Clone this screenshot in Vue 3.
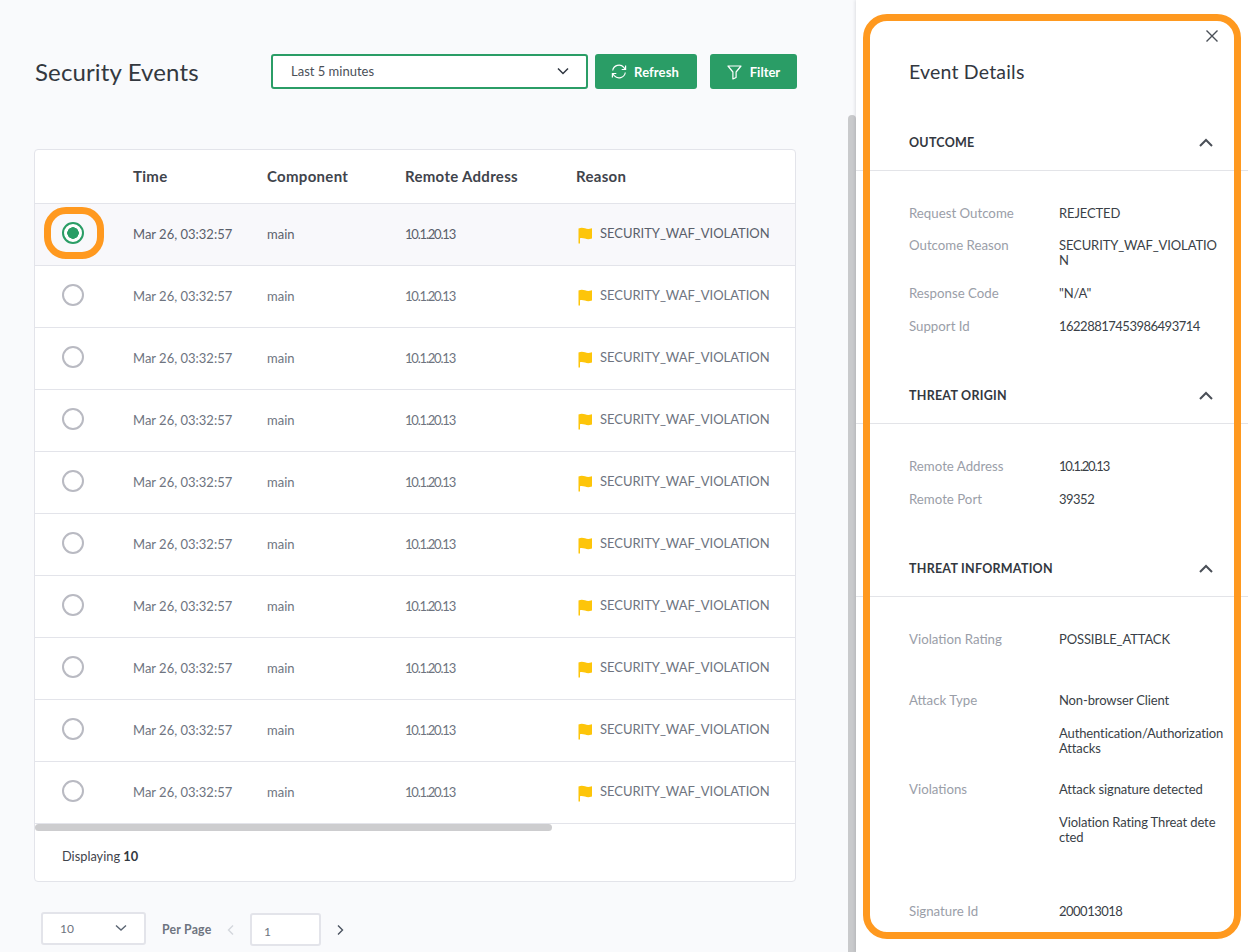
<script setup>
const rows = Array.from({ length: 10 }, (_, i) => i)
const sections = [
  {
    title: 'OUTCOME',
    cls: 'sec-outcome',
    items: [
      { label: 'Request Outcome', values: ['REJECTED'], cls: 'h32' },
      { label: 'Outcome Reason', values: ['SECURITY_WAF_VIOLATIO\nN'], cls: 'h48' },
      { label: 'Response Code', values: ['"N/A"'], cls: 'h33' },
      { label: 'Support Id', values: ['16228817453986493714'], num: true, cls: 'h33' }
    ]
  },
  {
    title: 'THREAT ORIGIN',
    cls: 'sec-origin',
    items: [
      { label: 'Remote Address', values: ['10.1.20.13'], ip: true, cls: 'h33' },
      { label: 'Remote Port', values: ['39352'], num: true, cls: 'h33' }
    ]
  },
  {
    title: 'THREAT INFORMATION',
    cls: 'sec-info',
    items: [
      { label: 'Violation Rating', values: ['POSSIBLE_ATTACK'], cls: 'h61' },
      { label: 'Attack Type', values: ['Non-browser Client', 'Authentication/Authorization\nAttacks'], cls: 'h89' },
      { label: 'Violations', values: ['Attack signature detected', 'Violation Rating Threat dete\ncted'], cls: 'h122' },
      { label: 'Signature Id', values: ['200013018'], num: true, cls: 'h33' }
    ]
  }
]
</script>

<template>
  <div class="page">
    <main class="main">
      <header class="head">
        <h1 class="title">Security Events</h1>
        <div class="range">
          <span>Last 5 minutes</span>
          <svg class="chev" width="14" height="14" viewBox="0 0 14 14"><path d="M2 4.500l5 5 5-5" fill="none" stroke="#2f3640" stroke-width="1.500"/></svg>
        </div>
        <button class="btn btn-refresh">
          <svg width="18" height="17" viewBox="0 0 17 17" fill="none" stroke="#fff" stroke-width="1.200"><path d="M2.200 7.500A6.400 6.400 0 0 1 13.300 4.300l1.500 2"/><path d="M15.100 2.600v3.900h-3.900"/><path d="M14.800 9.500A6.400 6.400 0 0 1 3.700 12.700l-1.500-2"/><path d="M1.900 14.400v-3.900h3.900"/></svg>
          <span>Refresh</span>
        </button>
        <button class="btn btn-filter">
          <svg width="15" height="16" viewBox="0 0 15 16" fill="none" stroke="#fff" stroke-width="1.200" stroke-linejoin="round"><path d="M1 2h13L9.100 8v5.500L5.900 15V8z"/></svg>
          <span>Filter</span>
        </button>
      </header>

      <section class="card">
        <div class="row thead">
          <div></div>
          <div>Time</div>
          <div>Component</div>
          <div>Remote Address</div>
          <div>Reason</div>
        </div>
        <div v-for="r in rows" :key="r" class="row tbody" :class="{ selected: r === 0 }">
          <div class="radio-cell"><span class="radio"></span></div>
          <div>Mar 26, 03:32:57</div>
          <div>main</div>
          <div class="ip">10.1.20.13</div>
          <div class="reason">
            <svg class="flag" width="16" height="17" viewBox="0 0 16 17"><path fill="#fdc50a" d="M1.500 1.500C4 .3 6 .6 8 1.300c2 .7 4 .9 7-.1v10.300c-3 1-5 .8-7 .1-2-.7-4-.9-5-.3v5.200H1.500z"/></svg>
            <span>SECURITY_WAF_VIOLATION</span>
          </div>
        </div>
        <div class="hscroll"><div class="hthumb"></div></div>
        <div class="foot">Displaying <b>10</b></div>
      </section>

      <div class="pager">
        <div class="size">
          <span>10</span>
          <svg width="12" height="12" viewBox="0 0 12 12"><path d="M1 3.500l5 4.500 5-4.500" fill="none" stroke="#5b6573" stroke-width="1.400"/></svg>
        </div>
        <span class="per">Per Page</span>
        <svg class="prev" width="10" height="12" viewBox="0 0 10 12"><path d="M7 1.500L2.500 6 7 10.500" fill="none" stroke="#d3d6dc" stroke-width="1.400"/></svg>
        <div class="pageno">1</div>
        <svg class="next" width="10" height="12" viewBox="0 0 10 12"><path d="M3 1.500L7.500 6 3 10.500" fill="none" stroke="#4a5360" stroke-width="1.400"/></svg>
      </div>

      <div class="vthumb"></div>
      <div class="mark-radio"></div>
    </main>

    <aside class="panel">
      <svg class="close" width="14" height="14" viewBox="0 0 14 14"><path d="M1.500 1.500l11 11M12.500 1.500l-11 11" stroke="#4a4f57" stroke-width="1.400" fill="none"/></svg>
      <h2 class="ptitle">Event Details</h2>
      <section v-for="s in sections" :key="s.title" class="sec" :class="s.cls">
        <div class="sec-head">
          <span>{{ s.title }}</span>
          <svg width="14" height="9" viewBox="0 0 14 9"><path d="M1 8l6-6 6 6" fill="none" stroke="#4a4f57" stroke-width="2"/></svg>
        </div>
        <div class="sec-body">
          <div v-for="it in s.items" :key="it.label" class="kv" :class="it.cls">
            <div class="k">{{ it.label }}</div>
            <div class="vals">
              <div v-for="v in it.values" :key="v" class="v" :class="{ num: it.num, ip: it.ip }">{{ v }}</div>
            </div>
          </div>
        </div>
      </section>
      <div class="mark-panel"></div>
    </aside>
  </div>
</template>

<style>
html, body { margin: 0; background: #f9fafc; }
</style>

<style scoped>
.page {
  display: flex;
  width: 1248px;
  height: 952px;
  overflow: hidden;
  font-family: Lato, "Liberation Sans", sans-serif;
  color: #3a3f47;
  background: #f9fafc;
}
.main {
  position: relative;
  box-sizing: border-box;
  width: 856px;
  padding: 54px 0 0 34px;
  flex: none;
}
.head {
  display: flex;
  align-items: center;
  height: 35px;
}
.title {
  width: 237px;
  margin: 0;
  padding-left: 1px;
  box-sizing: border-box;
  font-size: 24px;
  font-weight: 400;
  color: #33383f;
  letter-spacing: 0.13px;
  white-space: nowrap;
}
.range {
  box-sizing: border-box;
  width: 317px;
  height: 35px;
  display: flex;
  align-items: center;
  justify-content: space-between;
  padding: 0 16px 1px 18px;
  border: 2px solid #2a9d66;
  border-radius: 3px;
  background: #fff;
  font-size: 13px;
  color: #4a4f57;
}
.btn {
  display: flex;
  align-items: center;
  justify-content: center;
  height: 35px;
  border: 0;
  border-radius: 3px;
  background: #2a9d66;
  color: #fff;
  font: 700 13px Lato, "Liberation Sans", sans-serif;
  padding: 0;
}
.btn-refresh { width: 102px; margin-left: 7px; gap: 6px; letter-spacing: 0.1px; padding-right: 3px; }
.btn-filter { width: 87px; margin-left: 13px; gap: 8px; }
.card {
  box-sizing: border-box;
  width: 762px;
  height: 733px;
  margin-top: 60px;
  border: 1px solid #e3e4ea;
  border-radius: 4px;
  background: #fff;
  overflow: hidden;
}
.row {
  display: grid;
  grid-template-columns: 98px 134px 138px 171px 1fr;
  align-items: center;
  box-sizing: border-box;
}
.thead {
  height: 54px;
  padding-bottom: 2px;
  font-size: 15px;
  font-weight: 700;
  color: #3f444c;
  letter-spacing: 0.3px;
  border-bottom: 1px solid #e3e4ea;
}
.tbody {
  height: 62px;
  padding-bottom: 1px;
  font-size: 13px;
  color: #6e7480;
  border-bottom: 1px solid #e3e4ea;
}
.selected { background: #f8f8fb; }
.radio-cell { display: flex; padding-left: 27px; margin-top: -2px; }
.radio {
  box-sizing: border-box;
  width: 22px;
  height: 22px;
  border: 2px solid #b9bac2;
  border-radius: 50%;
  background: #fff;
}
.selected .radio {
  border-color: #2a9d66;
  background: radial-gradient(circle, #2a9d66 0 5.500px, #fff 6px);
}
.selected > div { color: #5a606b; }
.ip { letter-spacing: -1.200px; }
.reason {
  display: flex;
  align-items: flex-start;
  gap: 7px;
  margin-left: 1px;
}
.reason span { margin-top: 1px; letter-spacing: -0.03px; }
.flag { margin-top: 3px; flex: none; }
.hscroll {
  height: 7px;
  background: #fff;
}
.hthumb {
  width: 517px;
  height: 7px;
  border-radius: 4px;
  background: #cdcdcf;
}
.foot {
  padding: 17px 27px;
  font-size: 12.800px;
  color: #3f444c;
}
.foot b { font-weight: 700; color: #33383f; }
.pager {
  display: flex;
  align-items: center;
  margin: 30px 0 0 7px;
  height: 35px;
}
.size {
  box-sizing: border-box;
  width: 105px;
  height: 33px;
  margin-top: -3px;
  display: flex;
  align-items: center;
  justify-content: space-between;
  padding: 0 17px;
  border: 2px solid #e3e4ea;
  border-radius: 3px;
  background: #fff;
  font-size: 12px;
  color: #6e7480;
}
.per {
  width: 65px;
  margin-left: 16px;
  font-size: 12.300px;
  font-weight: 700;
  color: #6e7480;
  letter-spacing: 0.2px;
}
.prev { margin-left: -1px; }
.pageno {
  box-sizing: border-box;
  width: 71px;
  height: 33px;
  margin-left: 14px;
  padding: 9px 12px;
  border: 2px solid #e3e4ea;
  border-radius: 3px;
  background: #fff;
  font-size: 12px;
  color: #6e7480;
}
.next { margin-left: 14px; }
.vthumb {
  position: absolute;
  left: 848px;
  top: 115px;
  width: 8px;
  height: 837px;
  border-radius: 4px 4px 0 0;
  background: #c9cacc;
}
.mark-radio {
  position: absolute;
  left: 44px;
  top: 207px;
  box-sizing: border-box;
  width: 60px;
  height: 52px;
  border: 7px solid #ff991f;
  border-radius: 22px;
}
.panel {
  position: relative;
  box-sizing: border-box;
  width: 392px;
  height: 952px;
  background: #fff;
  box-shadow: -1px 0 3px rgba(30, 35, 50, 0.12);
}
.ptitle {
  margin: 0;
  padding: 60px 0 0 53px;
  height: 36px;
  line-height: 24px;
  font-size: 19.500px;
  font-weight: 400;
  color: #33383f;
  letter-spacing: 0.2px;
  box-sizing: content-box;
}
.close { position: absolute; left: 349px; top: 29px; }
.sec-head {
  box-sizing: border-box;
  display: flex;
  align-items: center;
  justify-content: space-between;
  height: 75px;
  padding: 19px 35px 0 53px;
  border-bottom: 1px solid #e3e4e8;
  font-size: 12.500px;
  font-weight: 700;
  letter-spacing: 0.25px;
  color: #33383f;
}
.sec-body { box-sizing: border-box; padding: 35px 0 0 53px; }
.sec-outcome .sec-body { height: 178px; }
.sec-origin .sec-body { height: 98px; }
.kv {
  display: grid;
  grid-template-columns: 150px 1fr;
  font-size: 13px;
  line-height: 15px;
}
.h32 { height: 32px; }
.h33 { height: 33px; }
.h48 { height: 48px; }
.h61 { height: 61px; }
.h89 { height: 89px; }
.h122 { height: 122px; }
.k { color: #9a9ea8; font-size: 13.250px; }
.v { color: #3a3f47; white-space: pre; margin-bottom: 18px; letter-spacing: -0.12px; }
.v.num { letter-spacing: -0.5px; }
.v.ip { letter-spacing: -1.200px; }
.mark-panel {
  position: absolute;
  left: 7px;
  top: 14px;
  box-sizing: border-box;
  width: 378px;
  height: 925px;
  border: 7px solid #ff991f;
  border-radius: 24px;
  pointer-events: none;
}
</style>
